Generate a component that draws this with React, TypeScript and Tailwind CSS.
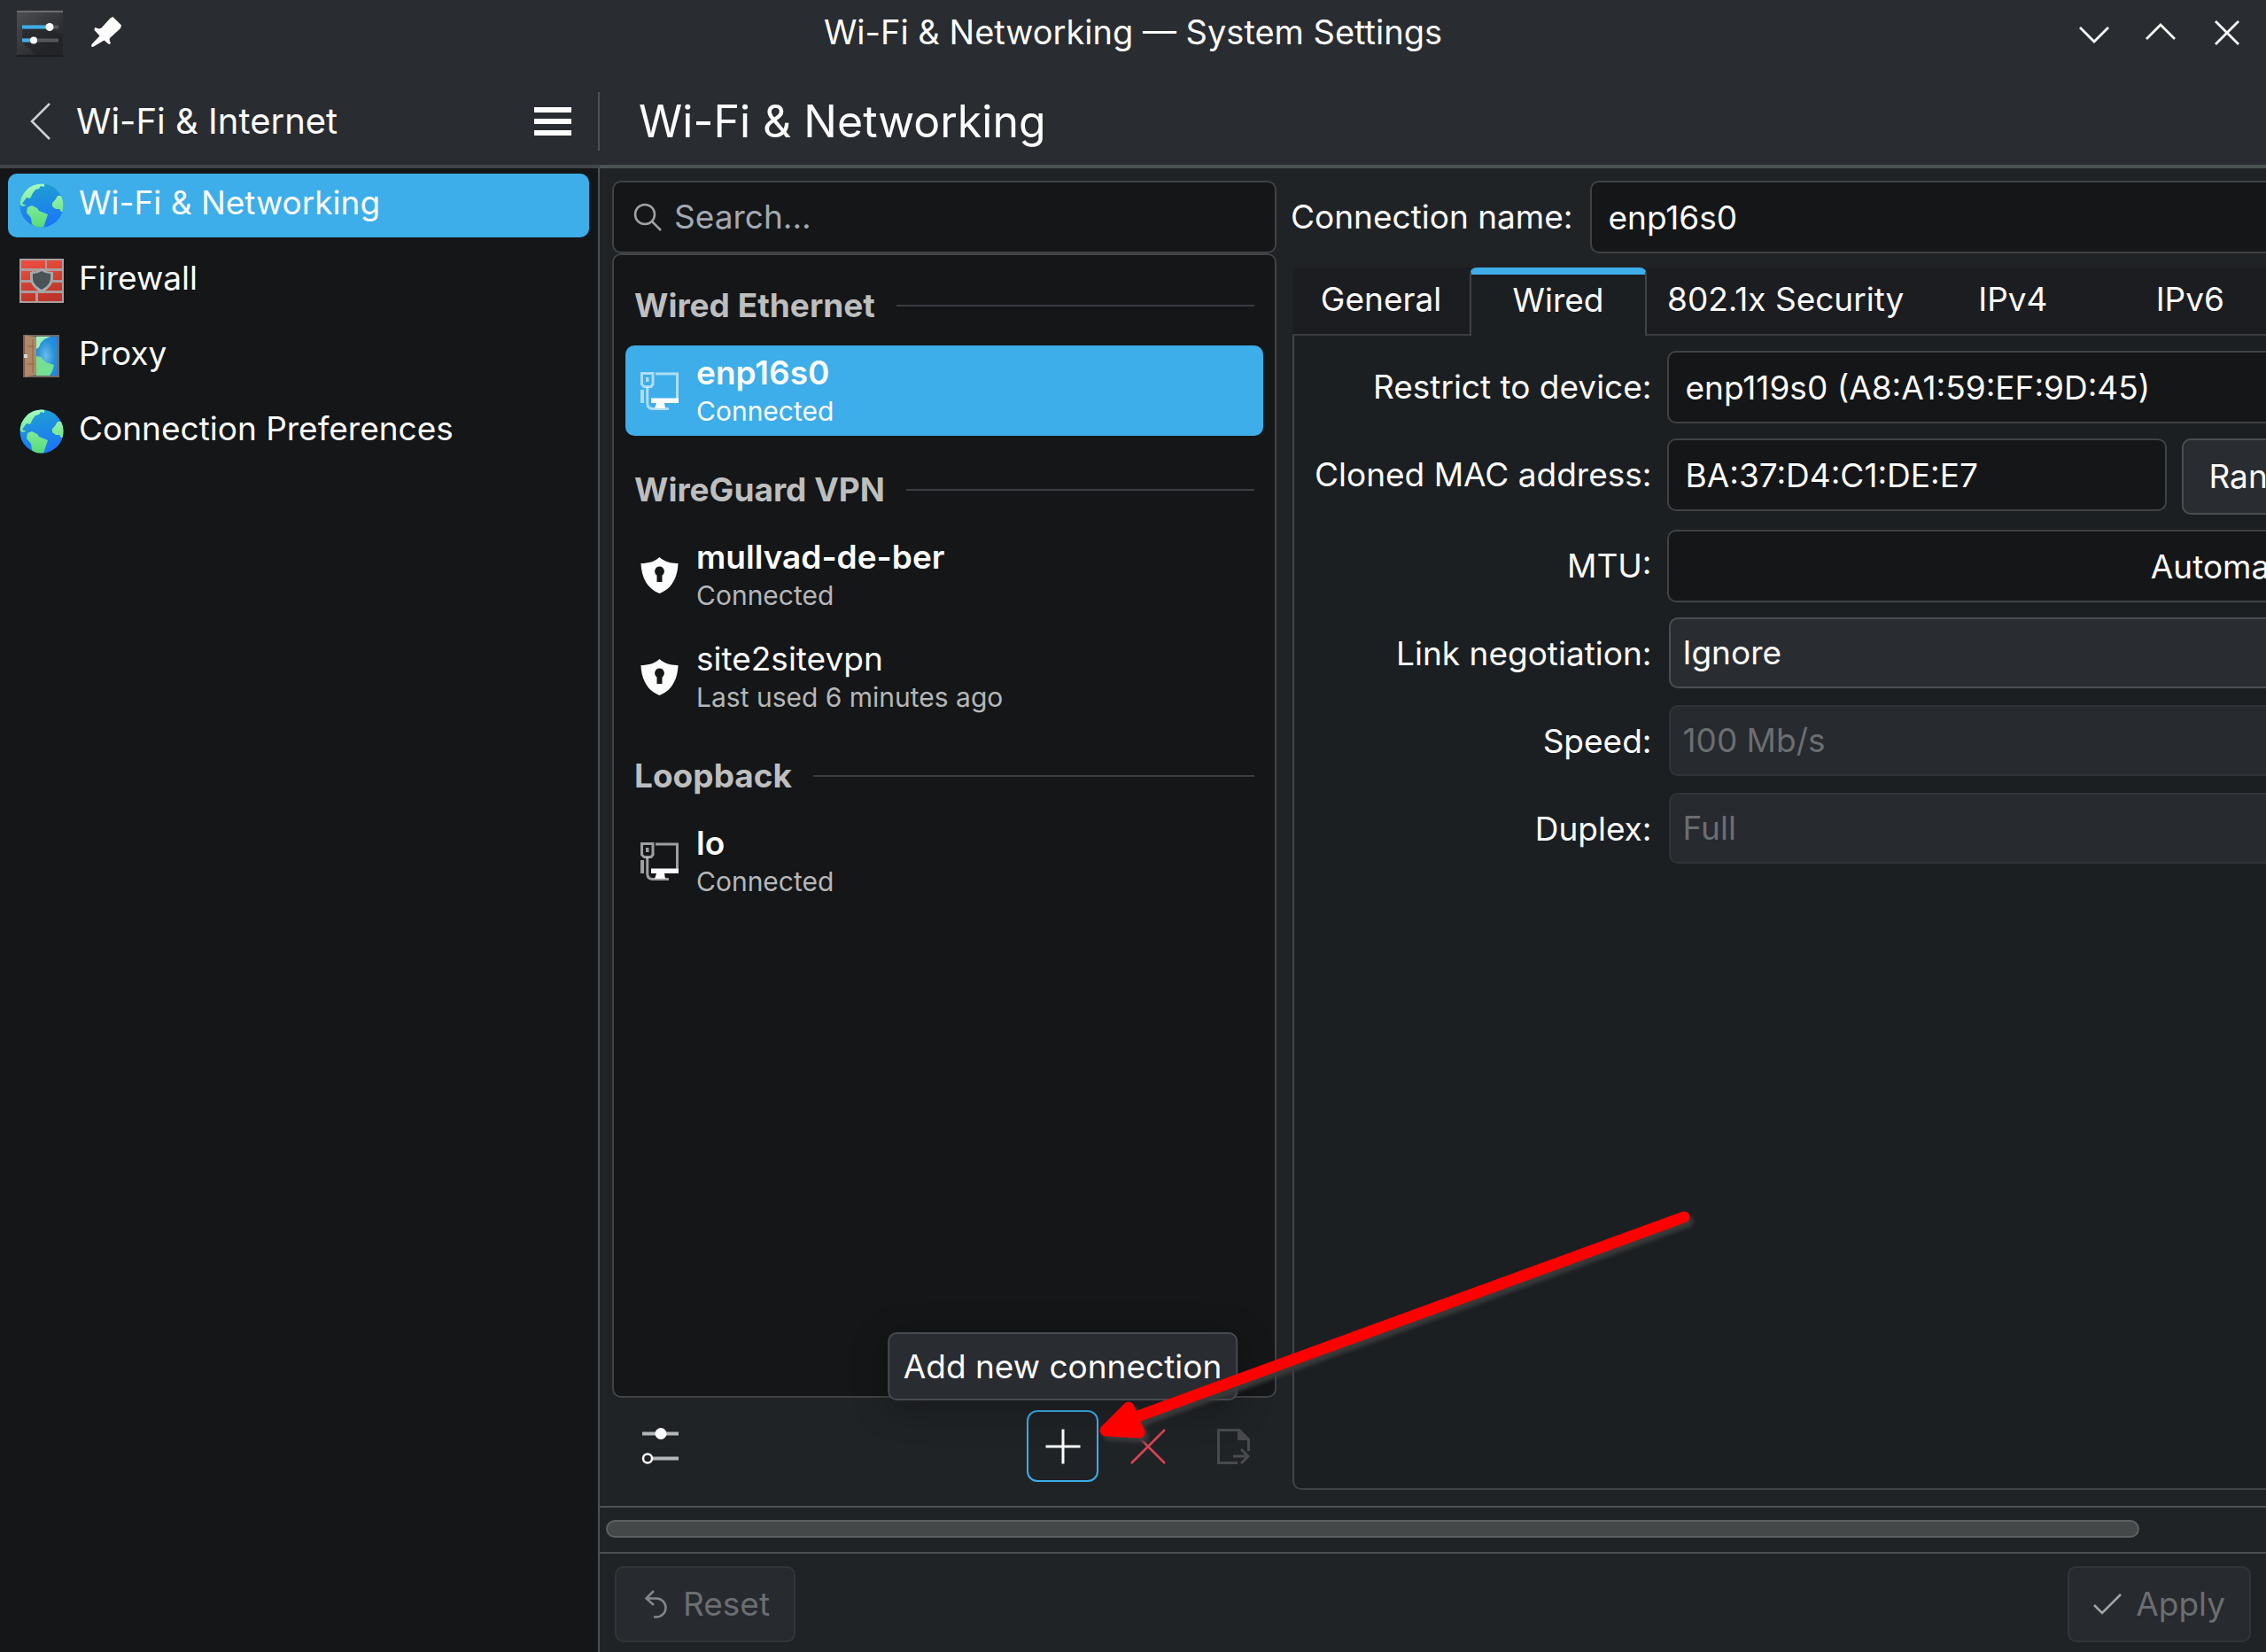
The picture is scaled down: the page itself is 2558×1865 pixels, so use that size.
import { useState } from "react";
import type { ReactNode } from "react";
import clsx from "clsx";

interface Connection {
	name: string,
	status: string,
	icon: 'wired' | 'vpn',
	active: boolean,
}

const modules = [
	{ name: 'Wi-Fi & Networking', icon: <GlobeIcon id="globe-network" /> },
	{ name: 'Firewall', icon: <FirewallIcon /> },
	{ name: 'Proxy', icon: <ProxyIcon /> },
	{ name: 'Connection Preferences', icon: <GlobeIcon id="globe-prefs" /> },
];

const groups: { title: string, connections: Connection[] }[] = [
	{
		title: 'Wired Ethernet',
		connections: [{ name: 'enp16s0', status: 'Connected', icon: 'wired', active: true }],
	},
	{
		title: 'WireGuard VPN',
		connections: [
			{ name: 'mullvad-de-ber', status: 'Connected', icon: 'vpn', active: true },
			{ name: 'site2sitevpn', status: 'Last used 6 minutes ago', icon: 'vpn', active: false },
		],
	},
	{
		title: 'Loopback',
		connections: [{ name: 'lo', status: 'Connected', icon: 'wired', active: true }],
	},
];

const tabs = ['General', 'Wired', '802.1x Security', 'IPv4', 'IPv6'];

function GlobeIcon({ id }: { id: string }) {
	return (
		<svg className="size-[50px] shrink-0" viewBox="0 0 50 50">
			<defs>
				<linearGradient id={`${id}-sea`} x1="0.4" y1="0" x2="0.6" y2="1">
					<stop offset="0" stopColor="#1f9fd0" />
					<stop offset="1" stopColor="#1c74fb" />
				</linearGradient>
				<linearGradient id={`${id}-land`} x1="0" y1="0" x2="0" y2="50" gradientUnits="userSpaceOnUse">
					<stop offset="0" stopColor="#a6fbc0" />
					<stop offset="1" stopColor="#58da76" />
				</linearGradient>
				<clipPath id={`${id}-clip`}><circle cx="25" cy="25" r="24.5" /></clipPath>
			</defs>
			<circle cx="25" cy="25" r="24.5" fill={`url(#${id}-sea)`} />
			<g clipPath={`url(#${id}-clip)`} fill={`url(#${id}-land)`}>
				<path d="M0 0H28V4L24 3L22 6L18 7L15 11L12 17L8 16L5 20L3 23L8 25L3 26L0 23Z" />
				<path d="M9 27L14 25L20 28L22 31L32 35L30 41L27 50L19 50L14 46L13 39L8 33Z" />
				<path d="M50 14L43 14L40 19L37 22L37 26L41 29L45 29L47 32L50 32Z" />
			</g>
		</svg>
	);
}

function FirewallIcon() {
	return (
		<svg className="size-[50px] shrink-0" viewBox="0 0 50 50">
			<defs>
				<linearGradient id="brick" x1="0" y1="0" x2="0.3" y2="1">
					<stop offset="0" stopColor="#f0503f" />
					<stop offset="1" stopColor="#bd3629" />
				</linearGradient>
			</defs>
			<rect width="50" height="50" fill="#a99ea0" />
			<path d="M2 2H29V11H2ZM31 2H48V11H31ZM2 14H14V24H2ZM16 14H48V24H16ZM2 27H48V36H2ZM2 39H18V48H2ZM21 39H48V48H21Z" fill="url(#brick)" />
			<path d="M25 11C29 14 33 15 38 15V22C38 30 31 35 25 39C19 35 12 30 12 22V15C17 15 21 14 25 11Z" fill="#a4aaab" />
			<path d="M25 14C28 16 32 17 35 17V22C35 28 30 32 25 35C20 32 15 28 15 22V17C18 17 22 16 25 14Z" fill="#4a5456" />
		</svg>
	);
}

function ProxyIcon() {
	return (
		<svg className="size-[50px] shrink-0" viewBox="0 0 50 50">
			<defs>
				<radialGradient id="sky" cx="0.45" cy="0.5" r="0.8">
					<stop offset="0" stopColor="#6db8ee" />
					<stop offset="0.5" stopColor="#2592d6" />
					<stop offset="1" stopColor="#1c7bf0" />
				</radialGradient>
			</defs>
			<rect x="4" y="1" width="41" height="48" fill="#6f6a66" />
			<rect x="19" y="3" width="24" height="44" fill="url(#sky)" />
			<path d="M19 3H35L28 6L24 10L22 15L19 17Z" fill="#9df2bb" />
			<path d="M19 25L24 26L30 32L39 35L37 42L34 47H19Z" fill="#74e092" />
			<path d="M4 1L19 4V46L4 49Z" fill="#b08a68" />
			<path d="M4 1H6V49H4Z" fill="#7d5d45" />
			<path d="M15 6V44M9 14H17M9 34H17" stroke="#94714f" strokeWidth="1.500" fill="none" />
			<rect x="5" y="23" width="4" height="4" fill="#d9d5d2" />
		</svg>
	);
}

function WiredIcon() {
	return (
		<svg className="size-[43px] shrink-0" viewBox="0 0 43 43" fill="none" stroke="#fcfcfc">
			<g strokeOpacity="0.6" strokeWidth="3">
				<path d="M1.5 1.5H14V14L12 16.5H4L1.5 14Z" />
				<path d="M17 2H41.5V30" />
				<path d="M7.75 17V35Q7.75 41.5 14 41.5H32" />
				<path d="M2 20V35" strokeWidth="4" />
			</g>
			<rect x="6" y="6" width="3.5" height="5" fill="#fcfcfc" fillOpacity="0.6" stroke="none" />
			<path d="M12 29.5H43V35H27L28 41H16L18 35H12Z" fill="#fcfcfc" stroke="none" />
		</svg>
	);
}

function VpnIcon() {
	return (
		<svg className="size-[43px] shrink-0" viewBox="0 0 43 43">
			<path fillRule="evenodd" fill="#fcfcfc" d="M21.5 1C27 6 34 8 42.500 8C42 24 35 37 21.5 42C8 37 1 24 0.500 8C9 8 16 6 21.5 1ZM21.5 11.5A5.500 5.500 0 0 0 18.500 21.500V29H24.500V21.500A5.500 5.500 0 0 0 21.500 11.500Z" />
		</svg>
	);
}

function TitleBar() {
	return (
		<header className="grid h-[75px] shrink-0 grid-cols-[1fr_auto_1fr] items-center bg-[#292c30]">
			<div className="flex items-center gap-8 pl-[19px]">
				<svg className="size-[52px]" viewBox="0 0 52 52">
					<defs>
						<linearGradient id="app" x1="0" y1="0" x2="0.7" y2="0.8">
							<stop offset="0" stopColor="#4d4f52" />
							<stop offset="1" stopColor="#27292c" />
						</linearGradient>
					</defs>
					<rect width="52" height="52" fill="url(#app)" />
					<path d="M6 20L38 20L52 28V52H24L6 36Z" fill="#1f2124" fillOpacity="0.6" />
					<path d="M0 1H52" stroke="#6c6e70" strokeWidth="2" />
					<path d="M0 51H52" stroke="#1b1d1f" strokeWidth="2" />
					<path d="M6 18.500H47M6 33.500H47" stroke="#55585b" strokeWidth="4" />
					<path d="M6 18.500H36M6 33.500H18" stroke="#3daee9" strokeWidth="4" />
					<circle cx="37" cy="18.500" r="4.500" fill="#fcfcfc" />
					<circle cx="19" cy="33.500" r="4" fill="#fcfcfc" />
				</svg>
				<button aria-label="Keep window on all desktops" className="pb-1">
					<svg className="size-[34px]" viewBox="0 0 34 34" fill="#fcfcfc">
						<path d="M24.500 0L34 9.500L33 13L21 24L20.500 26L22 30L20 31L14.500 26.500L2 34L0 33.500L0.500 31L9.500 21.500L3.500 15L4 12L9 13.500L11.500 12.500L21.500 1.500Z" />
					</svg>
				</button>
			</div>
			<h1 className="pb-0.5 text-[38px] text-[#fcfcfc]">Wi-Fi &amp; Networking — System Settings</h1>
			<div className="flex items-center justify-end gap-[41px] pr-[27px]">
				<button aria-label="Minimize">
					<svg className="size-[34px]" viewBox="0 0 34 34" fill="none" stroke="#fcfcfc" strokeWidth="2.800"><path d="M1 10L17 26L33 10" /></svg>
				</button>
				<button aria-label="Maximize">
					<svg className="size-[34px]" viewBox="0 0 34 34" fill="none" stroke="#fcfcfc" strokeWidth="2.800"><path d="M1 23L17 7L33 23" /></svg>
				</button>
				<button aria-label="Close">
					<svg className="size-[34px]" viewBox="0 0 34 34" fill="none" stroke="#fcfcfc" strokeWidth="2.800"><path d="M4 3L30 29M30 3L4 29" /></svg>
				</button>
			</div>
		</header>
	);
}

function Sidebar() {
	const [current, setCurrent] = useState('Wi-Fi & Networking');

	return (
		<nav className="flex w-[677px] shrink-0 flex-col">
			<div className="flex h-[115px] items-center border-b-4 border-[#42464a] bg-[#292c30] pt-[13px]">
				<div className="flex h-[66px] w-full items-center border-r-2 border-[#4d5154] pr-[30px] pl-[34px]">
					<button aria-label="Back">
						<svg className="h-[42px] w-[24px]" viewBox="0 0 24 42" fill="none" stroke="#cfd1d2" strokeWidth="2.500"><path d="M22 1L2 21L22 41" /></svg>
					</button>
					<span className="ml-7 grow text-[40px] text-[#fcfcfc]">Wi-Fi &amp; Internet</span>
					<button aria-label="Menu" className="flex flex-col gap-[7px]">
						<span className="h-1.5 w-[42px] bg-[#fcfcfc]" />
						<span className="h-1.5 w-[42px] bg-[#fcfcfc]" />
						<span className="h-1.5 w-[42px] bg-[#fcfcfc]" />
					</button>
				</div>
			</div>
			<ul className="flex grow flex-col gap-[13px] border-r-2 border-[#4d5154] bg-[#141618] pt-1.5 pr-2.5 pl-[9px]">
				{modules.map((item) => (
					<li key={item.name}>
						<button
							className={clsx('flex h-[72px] w-full items-center gap-[17px] rounded-[10px] pl-[13px] text-[#fcfcfc]', item.name === current && 'bg-[#3daee9]')}
							onClick={() => setCurrent(item.name)}
						>
							{item.icon}
							<span className="pb-1.5 text-[37px]">{item.name}</span>
						</button>
					</li>
				))}
			</ul>
		</nav>
	);
}

function ConnectionList() {
	const [selected, setSelected] = useState('enp16s0');

	return (
		<section className="relative z-10 flex w-[750px] shrink-0 flex-col">
			<label className="flex h-[82px] items-center gap-3.5 rounded-[10px] border-2 border-[#404244] bg-[#141618] pl-[22px]">
				<svg className="size-[32px]" viewBox="0 0 32 32" fill="none" stroke="#a1a4a7" strokeWidth="2.500"><circle cx="13" cy="13" r="11" /><path d="M20.500 20.500L31 31" /></svg>
				<input aria-label="Search" placeholder="Search..." className="h-full min-w-0 grow pb-0.5 text-[37px] text-[#fcfcfc] outline-none placeholder:text-[#a1a9b1]" />
			</label>
			<div className="flex grow flex-col rounded-[10px] border-2 border-[#404244] bg-[#141618] px-[13px] pt-[9px]">
				{groups.map((group) => (
					<div key={group.title}>
						<h3 className="flex h-[93px] items-center gap-6 px-[10px] pt-0.5 text-[37px] font-bold text-[#bdbebe]">
							{group.title}
							<span className="h-0.5 grow bg-[#3a3e42]" />
						</h3>
						{group.connections.map((c) => (
							<button
								key={c.name}
								className={clsx('mb-[13px] flex h-[102px] w-full items-center gap-5 rounded-[10px] pl-[17px] text-left', c.name === selected && 'bg-[#3daee9]')}
								onClick={() => setSelected(c.name)}
							>
								{c.icon === 'wired' ? <WiredIcon /> : <VpnIcon />}
								<span className="flex flex-col">
									<span className={clsx('text-[37px] leading-[46px] text-[#fcfcfc]', c.active && 'font-semibold')}>{c.name}</span>
									<span className={clsx('text-[30px] leading-[40px]', c.name === selected ? 'text-[#fcfcfc]' : 'text-[#b5b7b9]')}>{c.status}</span>
								</span>
							</button>
						))}
					</div>
				))}
			</div>
			<div className="mt-3.5 flex gap-[15px] pr-[9px] pl-[14px]">
				<button aria-label="Configure" className="mr-auto grid size-[81px] place-items-center">
					<svg className="size-[43px]" viewBox="0 0 43 43" fill="none">
						<path d="M1 7.500H42M12 35.500H42" stroke="#b4b6b7" strokeWidth="4" />
						<circle cx="22" cy="7.500" r="6.500" fill="#fcfcfc" />
						<circle cx="7" cy="35.500" r="5" stroke="#fcfcfc" strokeWidth="2.500" />
					</svg>
				</button>
				<div className="relative">
					<button aria-label="Add new connection" aria-describedby="add-tip" className="grid size-[81px] place-items-center rounded-[12px] border-2 border-[#3daee9]">
						<svg className="size-[40px]" viewBox="0 0 40 40" stroke="#fcfcfc" strokeWidth="3"><path d="M0.500 20H39.500M20 0.500V39.500" /></svg>
					</button>
					<div id="add-tip" role="tooltip" className="absolute bottom-[92px] left-1/2 flex h-[77px] -translate-x-1/2 items-center rounded-[10px] border-2 border-[#474b50] bg-[#292c30] px-4 text-[37px] whitespace-nowrap text-[#fcfcfc] shadow-[0_8px_40px_rgba(0,0,0,0.3)]">
						Add new connection
					</div>
					<svg className="pointer-events-none absolute -top-[232px] left-[77px] z-10 h-[280px] w-[684px] drop-shadow-[4px_5px_2px_#3a3a3a]" viewBox="0 0 684 280" fill="#ff0000" stroke="#ff0000" strokeWidth="13" strokeLinecap="round" strokeLinejoin="round">
						<path d="M665 14L40 242" />
						<path d="M12 255L38 229L50 257Z" />
					</svg>
				</div>
				<button aria-label="Remove selected connection" className="grid size-[81px] place-items-center">
					<svg className="size-[40px]" viewBox="0 0 40 40" stroke="#da4453" strokeWidth="2.500"><path d="M1 1L39 39M39 1L1 39" /></svg>
				</button>
				<button aria-label="Export selected connection" disabled className="grid size-[81px] place-items-center">
					<svg className="size-[40px]" viewBox="0 0 40 40" fill="none" stroke="#484a4d" strokeWidth="3">
						<path d="M25 38.500H3.500V1.500H27L37.500 12V25" />
						<path d="M25 1V13H37Z" fill="#484a4d" stroke="none" />
						<path d="M20 31H36M29 23L37 31L29 39" />
					</svg>
				</button>
			</div>
		</section>
	);
}

const inputStyle = 'h-[82px] min-w-0 grow rounded-[10px] border-2 border-[#404244] bg-[#141618] pl-[18px] text-[37px] text-[#fcfcfc] outline-none';

function Row({ id, label, children }: { id: string, label: string, children: ReactNode }) {
	return (
		<>
			<label htmlFor={id} className="text-right leading-[82px] whitespace-nowrap">{label}</label>
			<div className="flex min-w-0 items-start gap-[17px]">{children}</div>
		</>
	);
}

function Combo({ id, value, disabled = false }: { id: string, value: string, disabled?: boolean }) {
	return (
		<select
			id={id}
			disabled={disabled}
			className="ml-0.5 h-[80px] grow appearance-none rounded-[10px] border-2 border-[#4b4e51] bg-[#292c30] px-[13px] text-[37px] text-[#fcfcfc] disabled:border-[#303337] disabled:bg-[#272a2e] disabled:text-[#6b6e71] disabled:opacity-100"
		>
			<option>{value}</option>
		</select>
	);
}

function ConnectionEditor() {
	const [tab, setTab] = useState('Wired');

	return (
		<section className="-mb-[9px] flex min-w-0 grow flex-col text-[37px] text-[#fcfcfc]">
			<div className="flex items-center gap-5">
				<label htmlFor="conn-name" className="shrink-0">Connection name:</label>
				<input id="conn-name" defaultValue="enp16s0" className={inputStyle} />
			</div>
			<div role="tablist" className="mt-4 ml-0.5 flex h-[77px] shrink-0 rounded-tl-[8px] bg-[#1c1d21]">
				{tabs.map((name) => (
					<button
						key={name}
						role="tab"
						aria-selected={name === tab}
						className={clsx(
							'min-w-[200px] px-[23px]',
							name === tab
								? 'rounded-t-[8px] border-x-2 border-t-8 border-x-[#404244] border-t-[#3daee9] bg-[#1b1f22] pb-3'
								: 'border-b-2 border-[#3a3c3f] pb-1',
						)}
						onClick={() => setTab(name)}
					>
						{name}
					</button>
				))}
				<span className="grow border-b-2 border-[#3a3c3f]" />
			</div>
			<div className="ml-0.5 grow rounded-b-[10px] border-2 border-t-0 border-[#404244] bg-[#1b1f22] pt-[17px] pr-4 pl-[23px]">
				<div className="grid grid-cols-[auto_1fr] gap-x-[18px] gap-y-[17px]">
					<Row id="device" label="Restrict to device:">
						<input id="device" defaultValue="enp119s0 (A8:A1:59:EF:9D:45)" className={inputStyle} />
					</Row>
					<Row id="mac" label="Cloned MAC address:">
						<input id="mac" defaultValue="BA:37:D4:C1:DE:E7" className={inputStyle} />
						<button className="h-[86px] w-[211px] shrink-0 rounded-[10px] border-2 border-[#4b4e51] bg-[#292c30] pl-[28px] text-left">Random</button>
					</Row>
					<Row id="mtu" label="MTU:">
						<input id="mtu" defaultValue="Automatic" className={clsx(inputStyle, 'pr-[68px] text-right')} />
					</Row>
					<Row id="negotiation" label="Link negotiation:"><Combo id="negotiation" value="Ignore" /></Row>
					<Row id="speed" label="Speed:"><Combo id="speed" value="100 Mb/s" disabled /></Row>
					<Row id="duplex" label="Duplex:"><Combo id="duplex" value="Full" disabled /></Row>
				</div>
			</div>
		</section>
	);
}

export default function App() {
	return (
		<div className="flex h-screen flex-col overflow-hidden bg-[#202326] font-['Inter',sans-serif]">
			<TitleBar />
			<div className="flex min-h-0 grow">
				<Sidebar />
				<main className="flex min-w-0 grow flex-col">
					<div className="h-[115px] shrink-0 border-b-4 border-[#4b5454] bg-[#292c30] pt-8 pl-11">
						<h2 className="text-[50px] leading-[60px] text-[#fcfcfc]">Wi-Fi &amp; Networking</h2>
					</div>
					<div className="min-h-0 grow overflow-hidden">
						<div className="flex h-full w-[108%] gap-4 pt-3.5 pr-4 pb-[27px] pl-3.5">
							<ConnectionList />
							<ConnectionEditor />
						</div>
					</div>
					<div className="h-[54px] shrink-0 border-y-2 border-[#4d4f52] px-[7px] pt-3.5">
						<div className="h-[20px] w-[92.7%] rounded-full border-2 border-[#5d6062] bg-[#454849]" />
					</div>
					<footer className="flex h-[111px] shrink-0 items-start justify-between px-[17px] pt-3.5">
						<button disabled className="flex h-[86px] items-center gap-4 rounded-[10px] border-2 border-[#313539] bg-[#272a2e] px-[27px] text-[37px] text-[#6b6e71]">
							<svg className="size-[32px]" viewBox="0 0 32 32" fill="none" stroke="#85878a" strokeWidth="2.500"><path d="M15 1L6.500 9.500L15 17M6.500 9.500H18A10.500 10.500 0 0 1 18 30.500H15" /></svg>
							Reset
						</button>
						<button disabled className="flex h-[86px] items-center gap-4 rounded-[10px] border-2 border-[#313539] bg-[#272a2e] px-[27px] text-[37px] text-[#6b6e71]">
							<svg className="size-[32px]" viewBox="0 0 32 32" fill="none" stroke="#a3a5a7" strokeWidth="2.500"><path d="M1 17L10 26L31 5" /></svg>
							Apply
						</button>
					</footer>
				</main>
			</div>
		</div>
	);
}
